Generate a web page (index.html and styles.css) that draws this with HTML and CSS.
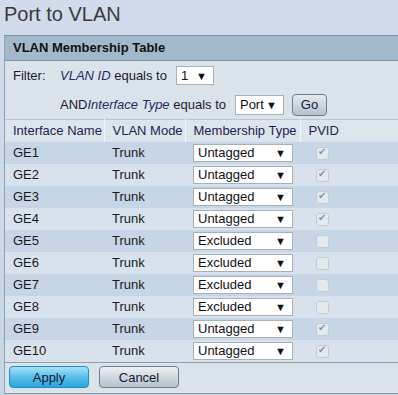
FILE: index.html
```html
<!DOCTYPE html>
<html lang="en">
<head>
    <meta charset="UTF-8">
    <title>Port to VLAN</title>
    <link rel="stylesheet" href="styles.css">
</head>
<body>
    <h1 class="page-title">Port to VLAN</h1>
    <div class="panel">
        <div class="panel-head">VLAN Membership Table</div>
        <div class="filter">
            <div class="filter-row">
                <span class="filter-label">Filter:</span>
                <span class="filter-text"><i>VLAN ID</i> equals to</span>
                <span class="sel sel-id"><select><option>1</option></select></span>
            </div>
            <div class="filter-row">
                <span class="filter-label"></span>
                <span class="filter-text">AND<i>Interface Type</i> equals to</span>
                <span class="sel sel-type"><select><option>Port</option></select></span>
                <button type="button" class="btn btn-go">Go</button>
            </div>
        </div>
        <table class="members">
            <thead>
                <tr>
                    <th class="c-name">Interface Name</th>
                    <th class="c-mode">VLAN Mode</th>
                    <th class="c-type">Membership Type</th>
                    <th class="c-pvid">PVID</th>
                </tr>
            </thead>
            <tbody>
                <tr><td>GE1</td><td>Trunk</td><td><span class="sel sel-row"><select><option>Untagged</option></select></span></td><td><span class="chk on"></span></td></tr>
                <tr><td>GE2</td><td>Trunk</td><td><span class="sel sel-row"><select><option>Untagged</option></select></span></td><td><span class="chk on"></span></td></tr>
                <tr><td>GE3</td><td>Trunk</td><td><span class="sel sel-row"><select><option>Untagged</option></select></span></td><td><span class="chk on"></span></td></tr>
                <tr><td>GE4</td><td>Trunk</td><td><span class="sel sel-row"><select><option>Untagged</option></select></span></td><td><span class="chk on"></span></td></tr>
                <tr><td>GE5</td><td>Trunk</td><td><span class="sel sel-row"><select><option>Excluded</option></select></span></td><td><span class="chk"></span></td></tr>
                <tr><td>GE6</td><td>Trunk</td><td><span class="sel sel-row"><select><option>Excluded</option></select></span></td><td><span class="chk"></span></td></tr>
                <tr><td>GE7</td><td>Trunk</td><td><span class="sel sel-row"><select><option>Excluded</option></select></span></td><td><span class="chk"></span></td></tr>
                <tr><td>GE8</td><td>Trunk</td><td><span class="sel sel-row"><select><option>Excluded</option></select></span></td><td><span class="chk"></span></td></tr>
                <tr><td>GE9</td><td>Trunk</td><td><span class="sel sel-row"><select><option>Untagged</option></select></span></td><td><span class="chk on"></span></td></tr>
                <tr><td>GE10</td><td>Trunk</td><td><span class="sel sel-row"><select><option>Untagged</option></select></span></td><td><span class="chk on"></span></td></tr>
            </tbody>
        </table>
        <div class="actions">
            <button type="button" class="btn btn-apply">Apply</button>
            <button type="button" class="btn btn-cancel">Cancel</button>
        </div>
    </div>
</body>
</html>
```

FILE: styles.css
```css
body {
    margin: 0;
    background: linear-gradient(#d0dceb, #c8d6e4);
    font-family: "Liberation Sans", Arial, sans-serif;
    font-size: 13px;
    color: #1a1a1a;
    overflow: hidden;
    height: 395px;
}
.page-title {
    margin: 0;
    padding: 3px 0 0 4px;
    height: 35px;
    box-sizing: border-box;
    font-size: 20px;
    font-weight: normal;
    color: #3a3a3a;
}
.panel {
    margin-left: 4px;
    width: 394px;
    box-sizing: border-box;
    border-top: 1px solid #7c92a4;
    border-left: 1px solid #8fa2b2;
    border-bottom: 1px solid #8799a8;
    background-color: #dae2ea;
}
.panel-head {
    height: 24px;
    line-height: 24px;
    padding-left: 8px;
    background-color: #a3b9cb;
    border-bottom: 1px solid #7f95a6;
    font-weight: bold;
    color: #111;
}
.filter-row {
    display: flex;
    align-items: center;
    height: 29px;
}
.filter-label {
    width: 47px;
    padding-left: 8px;
    color: #1a1a2a;
}
.filter-text {
    color: #1a1a2a;
    margin-right: 9px;
}
.filter-text i {
    color: #1f2d63;
}
.sel {
    position: relative;
    display: inline-block;
    background: #fff;
    border: 1px solid #a7b1ba;
    box-sizing: border-box;
}
.sel select {
    appearance: none;
    border: none;
    background: transparent;
    font-family: inherit;
    font-size: 13px;
    color: #111;
    padding: 0 0 0 4px;
    width: 100%;
    height: 100%;
    outline: none;
}
.sel::after {
    content: "\25BC";
    position: absolute;
    right: 6px;
    top: 50%;
    transform: translateY(-50%);
    font-size: 11px;
    color: #111;
    pointer-events: none;
}
.sel-id {
    width: 38px;
    height: 19px;
}
.sel-type {
    width: 49px;
    height: 20px;
}
.btn {
    font-family: inherit;
    font-size: 13px;
    color: #141a33;
    cursor: pointer;
    border-radius: 4px;
    padding: 0;
}
.btn-go {
    margin-left: 8px;
    width: 35px;
    height: 22px;
    border: 1px solid #6e7d88;
    background: linear-gradient(#e6ebef, #c9d4dc 55%, #b4c2cc);
}
.members {
    border-collapse: collapse;
    width: 100%;
}
.members th {
    height: 22px;
    padding: 0 0 0 8px;
    text-align: left;
    font-weight: normal;
    color: #1c2450;
    background-color: #dce4ec;
    border-top: 1px solid #b9c7d4;
    border-right: 1px solid #f2f5f8;
    box-sizing: border-box;
}
.members th.c-name { width: 99px; }
.members th.c-mode { width: 81px; }
.members th.c-type { width: 115px; }
.members th.c-pvid { border-right: none; }
.members td {
    height: 22px;
    padding: 0 0 0 8px;
    box-sizing: border-box;
}
.members tbody tr:nth-child(odd) {
    background-color: #c7d6e6;
}
.members tbody tr:nth-child(even) {
    background-color: #d8e2ed;
}
.sel-row {
    width: 100px;
    height: 18px;
    vertical-align: middle;
}
.chk {
    display: inline-block;
    margin-left: 8px;
    width: 11px;
    height: 11px;
    border: 1px solid #c4ccd3;
    border-radius: 3px;
    background-color: #e4e9ee;
    vertical-align: middle;
    position: relative;
}
.chk.on::after {
    content: "\2714";
    position: absolute;
    left: 1px;
    top: -2px;
    font-size: 10px;
    color: #8b9298;
}
.actions {
    display: flex;
    gap: 10px;
    padding: 3px 0 4px 4px;
    border-top: 1px solid #8f9fad;
    height: 31px;
    box-sizing: border-box;
    align-items: center;
}
.btn-apply {
    width: 80px;
    height: 22px;
    border: 1px solid #1d8fc6;
    background: linear-gradient(#a7e2f7, #58bfe9 50%, #2ca4dc);
}
.btn-cancel {
    width: 80px;
    height: 22px;
    border: 1px solid #6e7d88;
    background: linear-gradient(#eef1f3, #ccd6dd 55%, #b5c3cc);
}
```
